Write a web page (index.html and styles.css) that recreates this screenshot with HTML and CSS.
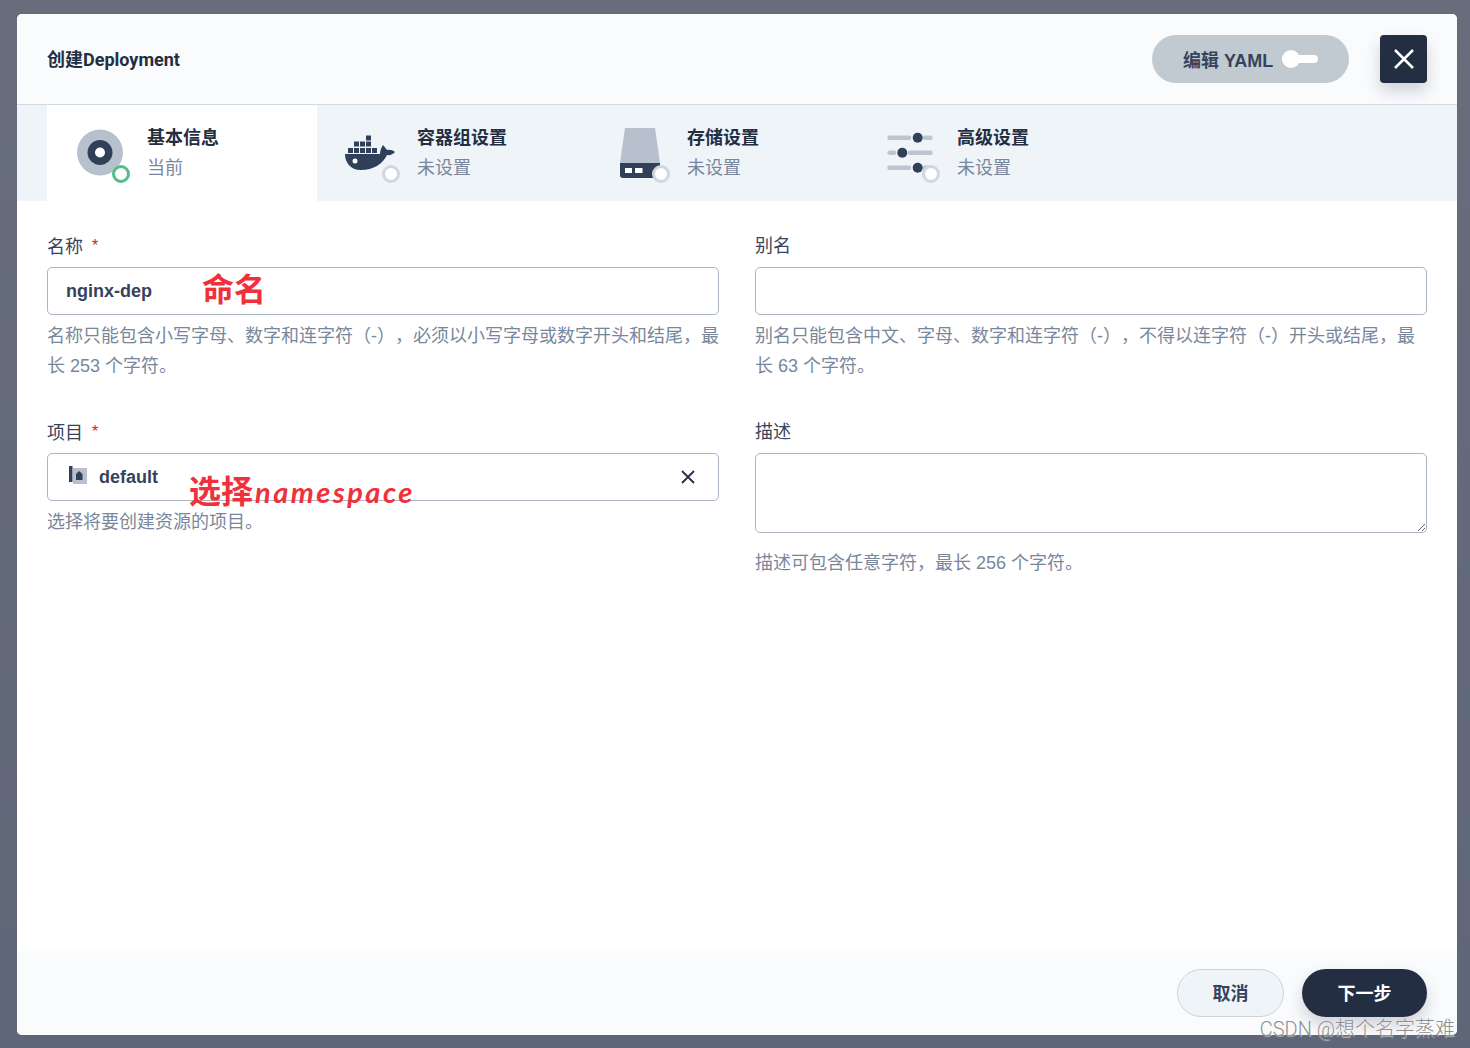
FILE: index.html
```html
<!DOCTYPE html>
<html lang="en">
<head>
    <meta charset="UTF-8">
    <meta name="viewport" content="width=device-width, initial-scale=1.0">
    <title>创建Deployment</title>
    <link rel="stylesheet" href="styles.css">
</head>
<body>

    <div class="modal">
        <div class="modal-header">
            <h2 class="modal-title">创建Deployment</h2>
            <button class="yaml-btn">编辑 YAML<span class="toggle"></span></button>
            <button class="close-btn">
                <svg width="20" height="20" viewBox="0 0 20 20"><path d="M1 1 19 19M19 1 1 19" stroke="#fff" stroke-width="2.500" fill="none"/></svg>
            </button>
        </div>

        <div class="tabs">
            <div class="tab active">
                <div class="tab-icon">
                    <svg width="48" height="48" viewBox="0 0 48 48">
                        <circle cx="23" cy="23.5" r="23" fill="#b6c1cd"/>
                        <circle cx="23" cy="23.5" r="12.5" fill="#2f4058"/>
                        <circle cx="23" cy="23.5" r="5" fill="#fff"/>
                    </svg>
                    <span class="status done"></span>
                </div>
                <div>
                    <div class="tab-title">基本信息</div>
                    <div class="tab-sub">当前</div>
                </div>
            </div>
            <div class="tab">
                <div class="tab-icon">
                    <svg width="48" height="48" viewBox="0 0 48 48" fill="#2f4058">
                        <path d="M1 19h5v5H1zM7 19h5v5H7zM13 19h5v5h-5zM19 19h5v5h-5zM25 19h5v5h-5zM7 12.500h5v5H7zM13 12.500h5v5h-5zM19 12.500h5v5h-5zM19 6.500h5v5h-5z"/>
                        <path d="M-2 25H33C33 22 34 19 36 16C38 18 39 20 40 21C42 20.500 46 21 48 23C46 25.500 43 26.500 40 26C36 34 28 41 14 41C3 41-2 33-2 25Z"/>
                        <circle cx="8" cy="32" r="2.500" fill="#fff"/>
                    </svg>
                    <span class="status"></span>
                </div>
                <div>
                    <div class="tab-title">容器组设置</div>
                    <div class="tab-sub">未设置</div>
                </div>
            </div>
            <div class="tab">
                <div class="tab-icon">
                    <svg width="48" height="48" viewBox="0 0 48 48">
                        <path d="M8-1H38L43 34H3Z" fill="#b6c1cd"/>
                        <path d="M3 34H43V49H6A3 3 0 0 1 3 46Z" fill="#2f4058"/>
                        <path d="M8 39h7v5H8zM18 39h7.500v5H18z" fill="#fff"/>
                    </svg>
                    <span class="status"></span>
                </div>
                <div>
                    <div class="tab-title">存储设置</div>
                    <div class="tab-sub">未设置</div>
                </div>
            </div>
            <div class="tab">
                <div class="tab-icon">
                    <svg width="48" height="48" viewBox="0 0 48 48">
                        <path d="M2.500 8.700H22M38 8.700H43.500M2.500 23.700H7M23 23.700H43.500M2.500 38.700H22M38 38.700H43.500" stroke="#bcc6d1" stroke-width="4.500" stroke-linecap="round" fill="none"/>
                        <circle cx="30.700" cy="8.700" r="5" fill="#2f4058"/>
                        <circle cx="15.300" cy="23.700" r="5" fill="#2f4058"/>
                        <circle cx="30.700" cy="38.700" r="5" fill="#2f4058"/>
                    </svg>
                    <span class="status"></span>
                </div>
                <div>
                    <div class="tab-title">高级设置</div>
                    <div class="tab-sub">未设置</div>
                </div>
            </div>
        </div>

        <form class="form">
            <div class="field">
                <label class="required">名称</label>
                <input type="text" value="nginx-dep">
                <span class="note note-name">命名</span>
                <p class="hint">名称只能包含小写字母、数字和连字符（-），必须以小写字母或数字开头和结尾，最长 253 个字符。</p>
            </div>
            <div class="field">
                <label>别名</label>
                <input type="text">
                <p class="hint">别名只能包含中文、字母、数字和连字符（-），不得以连字符（-）开头或结尾，最长 63 个字符。</p>
            </div>
            <div class="field">
                <label class="required">项目</label>
                <div class="select">
                    <svg width="20" height="20" viewBox="0 0 20 20">
                        <path d="M5 2H19V18H5Z" fill="#b6c1cd"/>
                        <path d="M1 0H4.500V16H1Z" fill="#2f4058"/>
                        <path d="M8 14V8L11 5 14.500 8V14Z" fill="#2f4058"/>
                    </svg>
                    <span class="select-value">default</span>
                    <svg class="clear" width="14" height="14" viewBox="0 0 14 14"><path d="M1 1 13 13M13 1 1 13" stroke="#242e42" stroke-width="1.800" fill="none"/></svg>
                </div>
                <span class="note note-project">选择<em>namespace</em></span>
                <p class="hint">选择将要创建资源的项目。</p>
            </div>
            <div class="field">
                <label>描述</label>
                <textarea></textarea>
                <p class="hint hint-area">描述可包含任意字符，最长 256 个字符。</p>
            </div>
        </form>

        <div class="modal-footer">
            <button class="btn">取消</button>
            <button class="btn btn-dark">下一步</button>
        </div>
    </div>

    <span class="watermark">CSDN @想个名字蒸难</span>

</body>
</html>
```

FILE: styles.css
```css
* {
    box-sizing: border-box;
}
body {
    position: relative;
    margin: 0;
    height: 1048px;
    padding: 14px 13px 13px 17px;
    overflow: hidden;
    background: linear-gradient(#676d7b, #5f6677);
    font-family: "Liberation Sans", "Noto Sans CJK SC", sans-serif;
    font-size: 18px;
    color: #36435c;
    text-spacing-trim: space-all;
}
button, input, textarea {
    font-family: inherit;
    font-size: 18px;
}
.modal {
    height: 100%;
    display: flex;
    flex-direction: column;
    background: #fff;
    border-radius: 5px;
    overflow: hidden;
}
.modal-header {
    height: 91px;
    flex: none;
    display: flex;
    align-items: center;
    padding: 0 30px;
    background: #fafbfd;
    border-bottom: 1px solid #d1d9e3;
}
.modal-title {
    margin: 0 auto 2px 0;
    font-family: Roboto, "Noto Sans CJK SC", sans-serif;
    font-size: 18px;
    font-weight: 700;
    color: #242e42;
}
.yaml-btn {
    width: 197px;
    height: 48px;
    margin-right: 31px;
    padding: 0 0 0 31px;
    display: flex;
    align-items: center;
    border: none;
    border-radius: 24px;
    background: #c1c9d1;
    color: #36435c;
    font-weight: 700;
}
.toggle {
    position: relative;
    width: 36px;
    height: 8px;
    margin-left: 9px;
    background: #fff;
    border-radius: 4px;
}
.toggle::before {
    content: "";
    position: absolute;
    left: 0;
    top: -5px;
    width: 18px;
    height: 18px;
    background: #fff;
    border-radius: 50%;
}
.close-btn {
    width: 47px;
    height: 48px;
    padding: 0;
    display: flex;
    align-items: center;
    justify-content: center;
    border: none;
    border-radius: 4px;
    background: #242e42;
    box-shadow: 0 8px 16px rgba(36, 46, 66, .2);
}

.tabs {
    height: 96px;
    flex: none;
    display: flex;
    padding-left: 30px;
    background: #eff4f8;
}
.tab {
    width: 270px;
    padding: 18px 0 0 30px;
    display: flex;
    align-items: flex-start;
}
.tab.active {
    background: #fff;
}
.tab-icon {
    position: relative;
    width: 48px;
    height: 48px;
    margin: 6px 22px 0 0;
    flex: none;
}
.tab-icon svg {
    display: block;
    overflow: visible;
}
.status {
    position: absolute;
    left: 35px;
    top: 36px;
    width: 18px;
    height: 18px;
    background: #fff;
    border: 3px solid #d1d7df;
    border-radius: 50%;
}
.status.done {
    border-color: #55bc8a;
}
.tab-title {
    padding-top: 1px;
    font-weight: 700;
    line-height: 29px;
    color: #242e42;
}
.tab-sub {
    line-height: 30px;
    color: #79879c;
}

.form {
    flex: 1;
    display: grid;
    grid-template-columns: 672px 672px;
    grid-template-rows: 186px auto;
    column-gap: 36px;
    padding: 30px 30px 0;
}
.field {
    position: relative;
}
label {
    display: block;
    height: 36px;
    line-height: 30px;
}
.required::after {
    content: "*";
    margin-left: 9px;
    color: #ca2621;
    font-size: 16px;
    vertical-align: 2px;
}
input, .select {
    display: flex;
    align-items: center;
    width: 100%;
    height: 48px;
    padding: 0 18px;
    border: 1px solid #abb5c4;
    border-radius: 5px;
    background: #fff;
    color: #36435c;
    font-weight: 700;
    outline: none;
}
.select {
    padding-left: 20px;
}
.select-value {
    margin-left: 11px;
    color: #36435c;
}
.select svg {
    margin-top: -2px;
}
.select .clear {
    margin: 0 5px 0 auto;
}
textarea {
    display: block;
    width: 100%;
    height: 80px;
    border: 1px solid #abb5c4;
    border-radius: 5px;
    outline: none;
}
.hint {
    margin: 6px 0 0;
    line-height: 30px;
    color: #79879c;
}
.hint-area {
    margin-top: 15px;
}

.note {
    position: absolute;
    color: #f0303a;
    font-weight: 700;
    white-space: nowrap;
}
.note-name {
    left: 155px;
    top: 35px;
    font-size: 32px;
    line-height: 48px;
}
.note-project {
    left: 142px;
    top: 55px;
    font-size: 32px;
    line-height: 40px;
}
.note-project em {
    margin-left: 2px;
    font-family: Lato, sans-serif;
    font-size: 29px;
    font-weight: 700;
    letter-spacing: 2.500px;
}

.modal-footer {
    height: 84px;
    flex: none;
    display: flex;
    justify-content: flex-end;
    align-items: center;
    gap: 18px;
    padding: 0 30px;
    background: #fafbfd;
}
.btn {
    width: 107px;
    height: 48px;
    padding: 0 0 2px;
    border: 1px solid #ccd3db;
    border-radius: 24px;
    background: #eff4f8;
    color: #36435c;
    font-weight: 700;
}
.btn-dark {
    width: 125px;
    border: none;
    background: #242e42;
    color: #fff;
    box-shadow: 0 8px 16px rgba(36, 46, 66, .2);
}
.watermark {
    position: absolute;
    right: 15px;
    bottom: 7px;
    font-family: Roboto, "Noto Sans CJK SC", sans-serif;
    font-size: 20px;
    font-weight: 300;
    line-height: 24px;
    color: #8f8f8f;
    text-shadow: 1px 1px 1px rgba(255, 255, 255, .5);
    white-space: nowrap;
}
```
